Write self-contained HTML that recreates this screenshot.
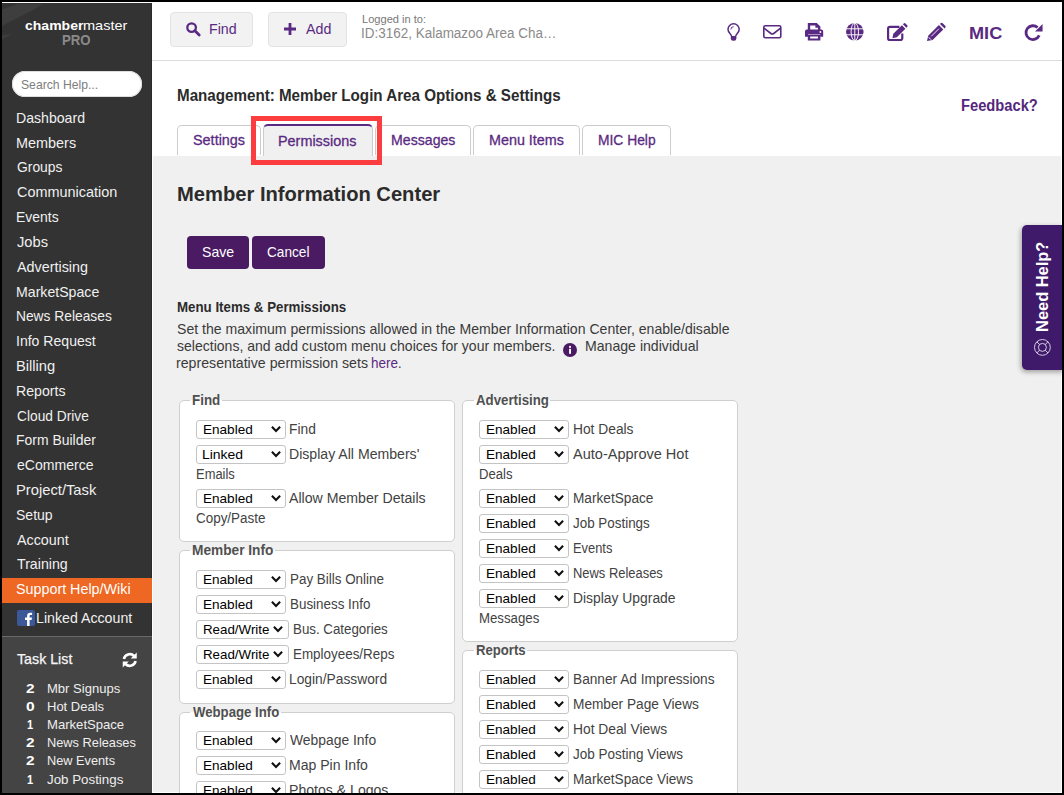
<!DOCTYPE html>
<html lang="en"><head><meta charset="utf-8"><title>Member Login Area Options &amp; Settings</title>
<style>
html,body{margin:0;padding:0}
body{width:1064px;height:795px;background:#000;position:relative;overflow:hidden;font-family:"Liberation Sans",sans-serif}
#app{position:absolute;left:2px;top:2px;width:1060px;height:791px;background:#fff;overflow:hidden}
#app *{box-sizing:border-box}
.abs,.t,.b{position:absolute}
.t{white-space:pre;transform-origin:0 50%;display:block}
#page{position:absolute;left:-2px;top:-2px;width:1064px;height:795px}
.sel{position:absolute;background:#fff;border:1px solid #c4c4c4;border-radius:3px}
.fs{position:absolute;background:#fff;border:1px solid #cfcfcf;border-radius:5px}
.gap{position:absolute;height:1px;background:#fff}
.tab{position:absolute;border:1px solid #ccc;border-bottom:0;border-radius:5px 5px 0 0;background:#fff}
.btn{position:absolute;background:#f2f2f2;border:1px solid #e3e3e3;border-radius:4px}
.pbtn{position:absolute;background:#4a1b63;border-radius:4px}
svg{position:absolute;overflow:visible}
</style></head><body>
<div id="app"><div id="page">

<div class="abs" style="left:2px;top:3px;width:150px;height:790px;background:#333;border-right:1px solid #2a2a2a"></div>
<svg style="left:2px;top:3px" width="150" height="60" viewBox="0 0 150 60"><path d="M0 6.500 L16 1 L41 1 L32 6.500 L0 23 Z" fill="#3e3e3e"/><path d="M0 32 L11 30.400 L0 36.500Z" fill="#3c3c3c"/></svg>
<div class="abs" style="left:2px;top:636px;width:150px;height:157px;background:#444;border-top:1px solid #6a6a6a"></div>
<div class="abs" style="left:152px;top:60px;width:910px;height:1px;background:#ddd"></div>
<div class="abs" style="left:153px;top:156px;width:908px;height:636px;background:#f0f0f0"></div>
<div class="abs" style="left:12px;top:71px;width:130px;height:25.5px;border-radius:13px;background:#fff;box-shadow:inset 0 0 0 1px #ddd"></div>
<div class="abs" style="left:2px;top:578px;width:150px;height:25px;background:#ee6723"></div>
<svg style="left:17px;top:610px" width="18" height="16" viewBox="0 0 18 16"><rect width="18" height="16" rx="2" fill="#3b5998"/><path d="M12.6 16V10h2l.35-2.4H12.6V6.2c0-.7.2-1.2 1.2-1.2h1.3V2.9c-.2 0-1-.1-1.9-.1-1.9 0-3.1 1.1-3.1 3.2v1.6H8v2.4h2.1V16z" fill="#fff"/></svg>
<svg style="left:121.900px;top:652.100px" width="15.500" height="16" viewBox="0 0 16 16" fill="none" stroke="#fff" stroke-width="2.700"><path d="M2 7A6.100 6.100 0 0 1 12.400 3.900"/><path d="M14 9A6.100 6.100 0 0 1 3.600 12.100"/><path d="M15.200 0.300v6.200H9z" fill="#fff" stroke="none"/><path d="M0.800 15.700V9.500h6.200z" fill="#fff" stroke="none"/></svg>
<div class="btn" style="left:170px;top:12px;width:83px;height:35px"></div>
<div class="btn" style="left:268px;top:12px;width:79px;height:35px"></div>
<svg style="left:186px;top:22px" width="14.5" height="14" viewBox="0 0 14.5 14" fill="none" stroke="#5a2a82"><circle cx="5.6" cy="5.6" r="4.3" stroke-width="2.3"/><path d="M8.9 8.8l4.3 4.2" stroke-width="2.8" stroke-linecap="round"/></svg>
<svg style="left:284px;top:23px" width="12" height="12" viewBox="0 0 12 12"><path d="M4.6 0h2.8v4.6H12v2.8H7.4V12H4.6V7.4H0V4.6h4.6z" fill="#5a2a82"/></svg>
<svg style="left:727px;top:23px" width="13.2" height="18" viewBox="0 0 13.2 18" fill="none" stroke="#5a2a82"><path d="M4.400 13c0-2.100-3.400-3.400-3.400-6.600a5.600 5.600 0 0 1 11.200 0c0 3.200-3.400 4.500-3.400 6.600" stroke-width="1.500"/><path d="M3.900 6.400a2.700 2.700 0 0 1 2.700-2.700" stroke-width="1"/><path d="M3.800 13.100h5.600v2.300a2.400 2.400 0 0 1-2.400 2.400h-.8a2.400 2.400 0 0 1-2.400-2.400z" fill="#5a2a82" stroke="none"/></svg>
<svg style="left:763.3px;top:25.2px" width="18.6" height="13.6" viewBox="0 0 18.600 13.600" fill="none" stroke="#5a2a82" stroke-width="1.600"><rect x=".8" y=".8" width="17" height="12" rx="1.500"/><path d="M1 3.200l6.900 5.300a2.300 2.300 0 0 0 2.800 0L17.600 3.200"/></svg>
<svg style="left:804.8px;top:23.2px" width="18.200" height="17.600" viewBox="0 0 18.200 17.600" fill="#5a2a82"><path d="M2.800 0h9l3.600 3.600V7.800h-2.400V4.800h-2.600V2.400H5.200v5.400H2.800z"/><path d="M1.800 6.600h14.600a1.800 1.800 0 0 1 1.800 1.800v5.400h-3v-2.800H3v2.800H0V8.400a1.800 1.800 0 0 1 1.800-1.800z"/><path d="M2.800 11.600h12.600v6H2.800z M5.200 13.600v1.800h7.800v-1.800z" fill-rule="evenodd"/><circle cx="15.400" cy="9" r=".9" fill="#fff"/></svg>
<svg style="left:846.2px;top:23.4px" width="17.6" height="17.600" viewBox="0 0 17.600 17.600"><circle cx="8.800" cy="8.800" r="8.800" fill="#5a2a82"/><g fill="none" stroke="#fff" stroke-width=".95"><ellipse cx="8.800" cy="8.800" rx="3.700" ry="8.800"/><path d="M8.800 0v17.600M0 5.800h17.600M0 11.800h17.600"/></g></svg>
<svg style="left:886.8px;top:22.700px" width="20.700" height="18.100" viewBox="0 0 20.700 18.100"><path d="M12.400 3.800H2.900A1.800 1.800 0 0 0 1.100 5.600v9.600a1.800 1.800 0 0 0 1.800 1.800h10.600a1.800 1.800 0 0 0 1.800-1.800V10.600" fill="none" stroke="#5a2a82" stroke-width="2.200"/><path d="M5.400 14.200l.9-4.400L14.900 1.200l3.500 3.500L9.800 13.300z M15.900.3l.8-.8a1.300 1.300 0 0 1 1.800 0l1.700 1.700a1.300 1.300 0 0 1 0 1.800l-.8.800z" fill="#5a2a82" transform="translate(0,1)"/></svg>
<svg style="left:927.1px;top:22.700px" width="18.600" height="18.100" viewBox="0 0 18.600 18.100"><path d="M0 18.100l1.200-5.400L11.900 2l4.400 4.400L5.600 17.100z M13 .9l.6-.6a1.500 1.500 0 0 1 2.100 0l2.500 2.500a1.500 1.500 0 0 1 0 2.100l-.6.600z" fill="#5a2a82"/><path d="M1.700 14.300l2.300 2.300" stroke="#fff" stroke-width="1"/><path d="M4.300 13.300l7.600-7.600" stroke="#fff" stroke-width=".9"/></svg>
<svg style="left:1025.300px;top:24.400px" width="17.600" height="16.400" viewBox="0 0 17.600 16.400"><path d="M14.200 11.400A6.900 6.900 0 1 1 12.600 3.600" fill="none" stroke="#5a2a82" stroke-width="2.800"/><path d="M17.600 0v7.600h-7.600z" fill="#5a2a82"/></svg>
<div class="tab" style="left:177px;top:125px;width:84px;height:30px"></div>
<div class="tab" style="left:263px;top:124px;width:110px;height:32px;background:#f0f0f0;border-top:2px solid #5a2a82"></div>
<div class="tab" style="left:375px;top:125px;width:95.500px;height:30px"></div>
<div class="tab" style="left:473px;top:125px;width:106.500px;height:30px"></div>
<div class="tab" style="left:582px;top:125px;width:89px;height:30px"></div>
<div class="abs" style="left:251px;top:116px;width:131px;height:49px;border:5px solid #fb3d40"></div>
<div class="pbtn" style="left:187px;top:236px;width:62px;height:33px"></div>
<div class="pbtn" style="left:252px;top:236px;width:73px;height:33px"></div>
<svg style="left:563px;top:342.700px" width="14" height="14" viewBox="0 0 14 14"><circle cx="7" cy="7" r="7" fill="#4a1b63"/><rect x="6.100" y="2.900" width="1.900" height="1.900" fill="#fff"/><rect x="6.100" y="5.800" width="1.900" height="5" fill="#fff"/></svg>
<div class="fs" style="left:179px;top:400px;width:276px;height:142px"></div>
<div class="gap" style="left:190.3px;top:400px;width:31.799999999999983px"></div>
<div class="fs" style="left:179px;top:550px;width:276px;height:154px"></div>
<div class="gap" style="left:190.3px;top:550px;width:85.09999999999997px"></div>
<div class="fs" style="left:179px;top:712px;width:276px;height:118px"></div>
<div class="gap" style="left:190.3px;top:712px;width:90.69999999999999px"></div>
<div class="fs" style="left:462px;top:400px;width:276px;height:242px"></div>
<div class="gap" style="left:473.8px;top:400px;width:76.69999999999999px"></div>
<div class="fs" style="left:462px;top:650px;width:276px;height:180px"></div>
<div class="gap" style="left:473.8px;top:650px;width:53.599999999999966px"></div>
<div class="sel" style="left:196px;top:420px;width:90px;height:19px"></div>
<svg style="left:270.9px;top:426.3px" width="10" height="6" viewBox="0 0 10 6"><path d="M.9 .8l4.100 4.200 4.100-4.200" fill="none" stroke="#111" stroke-width="2.100"/></svg>
<div class="sel" style="left:196px;top:445px;width:90px;height:19px"></div>
<svg style="left:270.9px;top:451.3px" width="10" height="6" viewBox="0 0 10 6"><path d="M.9 .8l4.100 4.200 4.100-4.200" fill="none" stroke="#111" stroke-width="2.100"/></svg>
<div class="sel" style="left:196px;top:489px;width:90px;height:19px"></div>
<svg style="left:270.9px;top:495.3px" width="10" height="6" viewBox="0 0 10 6"><path d="M.9 .8l4.100 4.200 4.100-4.200" fill="none" stroke="#111" stroke-width="2.100"/></svg>
<div class="sel" style="left:196px;top:570px;width:90px;height:19px"></div>
<svg style="left:270.9px;top:576.3px" width="10" height="6" viewBox="0 0 10 6"><path d="M.9 .8l4.100 4.200 4.100-4.200" fill="none" stroke="#111" stroke-width="2.100"/></svg>
<div class="sel" style="left:196px;top:595px;width:90px;height:19px"></div>
<svg style="left:270.9px;top:601.3px" width="10" height="6" viewBox="0 0 10 6"><path d="M.9 .8l4.100 4.200 4.100-4.200" fill="none" stroke="#111" stroke-width="2.100"/></svg>
<div class="sel" style="left:196px;top:620px;width:93px;height:19px"></div>
<svg style="left:273.4px;top:626.3px" width="10" height="6" viewBox="0 0 10 6"><path d="M.9 .8l4.100 4.200 4.100-4.200" fill="none" stroke="#111" stroke-width="2.100"/></svg>
<div class="sel" style="left:196px;top:645px;width:93px;height:19px"></div>
<svg style="left:273.4px;top:651.3px" width="10" height="6" viewBox="0 0 10 6"><path d="M.9 .8l4.100 4.200 4.100-4.200" fill="none" stroke="#111" stroke-width="2.100"/></svg>
<div class="sel" style="left:196px;top:670px;width:90px;height:19px"></div>
<svg style="left:270.9px;top:676.3px" width="10" height="6" viewBox="0 0 10 6"><path d="M.9 .8l4.100 4.200 4.100-4.200" fill="none" stroke="#111" stroke-width="2.100"/></svg>
<div class="sel" style="left:196px;top:731px;width:90px;height:19px"></div>
<svg style="left:270.9px;top:737.3px" width="10" height="6" viewBox="0 0 10 6"><path d="M.9 .8l4.100 4.200 4.100-4.200" fill="none" stroke="#111" stroke-width="2.100"/></svg>
<div class="sel" style="left:196px;top:756px;width:90px;height:19px"></div>
<svg style="left:270.9px;top:762.3px" width="10" height="6" viewBox="0 0 10 6"><path d="M.9 .8l4.100 4.200 4.100-4.200" fill="none" stroke="#111" stroke-width="2.100"/></svg>
<div class="sel" style="left:196px;top:781px;width:90px;height:19px"></div>
<svg style="left:270.9px;top:787.3px" width="10" height="6" viewBox="0 0 10 6"><path d="M.9 .8l4.100 4.200 4.100-4.200" fill="none" stroke="#111" stroke-width="2.100"/></svg>
<div class="sel" style="left:479px;top:420px;width:90px;height:19px"></div>
<svg style="left:553.9px;top:426.3px" width="10" height="6" viewBox="0 0 10 6"><path d="M.9 .8l4.100 4.200 4.100-4.200" fill="none" stroke="#111" stroke-width="2.100"/></svg>
<div class="sel" style="left:479px;top:445px;width:90px;height:19px"></div>
<svg style="left:553.9px;top:451.3px" width="10" height="6" viewBox="0 0 10 6"><path d="M.9 .8l4.100 4.200 4.100-4.200" fill="none" stroke="#111" stroke-width="2.100"/></svg>
<div class="sel" style="left:479px;top:489px;width:90px;height:19px"></div>
<svg style="left:553.9px;top:495.3px" width="10" height="6" viewBox="0 0 10 6"><path d="M.9 .8l4.100 4.200 4.100-4.200" fill="none" stroke="#111" stroke-width="2.100"/></svg>
<div class="sel" style="left:479px;top:514px;width:90px;height:19px"></div>
<svg style="left:553.9px;top:520.3px" width="10" height="6" viewBox="0 0 10 6"><path d="M.9 .8l4.100 4.200 4.100-4.200" fill="none" stroke="#111" stroke-width="2.100"/></svg>
<div class="sel" style="left:479px;top:539px;width:90px;height:19px"></div>
<svg style="left:553.9px;top:545.3px" width="10" height="6" viewBox="0 0 10 6"><path d="M.9 .8l4.100 4.200 4.100-4.200" fill="none" stroke="#111" stroke-width="2.100"/></svg>
<div class="sel" style="left:479px;top:564px;width:90px;height:19px"></div>
<svg style="left:553.9px;top:570.3px" width="10" height="6" viewBox="0 0 10 6"><path d="M.9 .8l4.100 4.200 4.100-4.200" fill="none" stroke="#111" stroke-width="2.100"/></svg>
<div class="sel" style="left:479px;top:589px;width:90px;height:19px"></div>
<svg style="left:553.9px;top:595.3px" width="10" height="6" viewBox="0 0 10 6"><path d="M.9 .8l4.100 4.200 4.100-4.200" fill="none" stroke="#111" stroke-width="2.100"/></svg>
<div class="sel" style="left:479px;top:670px;width:90px;height:19px"></div>
<svg style="left:553.9px;top:676.3px" width="10" height="6" viewBox="0 0 10 6"><path d="M.9 .8l4.100 4.200 4.100-4.200" fill="none" stroke="#111" stroke-width="2.100"/></svg>
<div class="sel" style="left:479px;top:695px;width:90px;height:19px"></div>
<svg style="left:553.9px;top:701.3px" width="10" height="6" viewBox="0 0 10 6"><path d="M.9 .8l4.100 4.200 4.100-4.200" fill="none" stroke="#111" stroke-width="2.100"/></svg>
<div class="sel" style="left:479px;top:720px;width:90px;height:19px"></div>
<svg style="left:553.9px;top:726.3px" width="10" height="6" viewBox="0 0 10 6"><path d="M.9 .8l4.100 4.200 4.100-4.200" fill="none" stroke="#111" stroke-width="2.100"/></svg>
<div class="sel" style="left:479px;top:745px;width:90px;height:19px"></div>
<svg style="left:553.9px;top:751.3px" width="10" height="6" viewBox="0 0 10 6"><path d="M.9 .8l4.100 4.200 4.100-4.200" fill="none" stroke="#111" stroke-width="2.100"/></svg>
<div class="sel" style="left:479px;top:770px;width:90px;height:19px"></div>
<svg style="left:553.9px;top:776.3px" width="10" height="6" viewBox="0 0 10 6"><path d="M.9 .8l4.100 4.200 4.100-4.200" fill="none" stroke="#111" stroke-width="2.100"/></svg>
<div class="abs" style="left:1022px;top:225px;width:42px;height:144.500px;background:#3f1a6b;border-radius:5px 0 0 5px;box-shadow:-1px 2px 5px rgba(0,0,0,.35)"></div>
<svg style="left:1034px;top:338.700px" width="16.800" height="16.800" viewBox="0 0 16.800 16.800" fill="none" stroke="#e6dcf0" stroke-width=".9"><circle cx="8.400" cy="8.400" r="7.900"/><circle cx="8.400" cy="8.400" r="4"/><path d="M2.800 2.800l2.800 2.800M14 2.800l-2.800 2.800M2.800 14l2.800-2.800M14 14l-2.800-2.800"/></svg>
<span class="t" id="t0" style="left:24.99px;top:17.00px;font-size:13.5px;line-height:17px;color:#fff;transform:scaleX(1.0379);font-weight:700">chamber</span>
<span class="t" id="t1" style="left:82.65px;top:17.00px;font-size:13.5px;line-height:17px;color:#fff;transform:scaleX(1.0754)">master</span>
<span class="t" id="t2" style="left:62.40px;top:31.00px;font-size:14px;line-height:18px;color:#8a8a8a;transform:scaleX(0.9442);font-weight:700">PRO</span>
<span class="t" id="t3" style="left:20.60px;top:77.00px;font-size:13px;line-height:16px;color:#7d7d7d;transform:scaleX(0.9362)">Search Help...</span>
<span class="t" id="t4" style="left:16.48px;top:108.00px;font-size:15px;line-height:19px;color:#f0f0f0;transform:scaleX(0.9400)">Dashboard</span>
<span class="t" id="t5" style="left:16.34px;top:133.00px;font-size:15px;line-height:19px;color:#f0f0f0;transform:scaleX(0.9621)">Members</span>
<span class="t" id="t6" style="left:16.88px;top:157.00px;font-size:15px;line-height:19px;color:#f0f0f0;transform:scaleX(0.9242)">Groups</span>
<span class="t" id="t7" style="left:16.60px;top:182.00px;font-size:15px;line-height:19px;color:#f0f0f0;transform:scaleX(0.9619)">Communication</span>
<span class="t" id="t8" style="left:16.37px;top:207.00px;font-size:15px;line-height:19px;color:#f0f0f0;transform:scaleX(0.9288)">Events</span>
<span class="t" id="t9" style="left:17.10px;top:232.00px;font-size:15px;line-height:19px;color:#f0f0f0;transform:scaleX(0.9788)">Jobs</span>
<span class="t" id="t10" style="left:17.35px;top:257.00px;font-size:15px;line-height:19px;color:#f0f0f0;transform:scaleX(0.9569)">Advertising</span>
<span class="t" id="t11" style="left:16.47px;top:282.00px;font-size:15px;line-height:19px;color:#f0f0f0;transform:scaleX(0.9423)">MarketSpace</span>
<span class="t" id="t12" style="left:16.38px;top:306.00px;font-size:15px;line-height:19px;color:#f0f0f0;transform:scaleX(0.9191)">News Releases</span>
<span class="t" id="t13" style="left:16.37px;top:331.00px;font-size:15px;line-height:19px;color:#f0f0f0;transform:scaleX(0.9369)">Info Request</span>
<span class="t" id="t14" style="left:16.39px;top:356.00px;font-size:15px;line-height:19px;color:#f0f0f0;transform:scaleX(0.9797)">Billing</span>
<span class="t" id="t15" style="left:15.65px;top:381.00px;font-size:15px;line-height:19px;color:#f0f0f0;transform:scaleX(0.9429)">Reports</span>
<span class="t" id="t16" style="left:16.93px;top:406.00px;font-size:15px;line-height:19px;color:#f0f0f0;transform:scaleX(0.9164)">Cloud Drive</span>
<span class="t" id="t17" style="left:16.48px;top:430.00px;font-size:15px;line-height:19px;color:#f0f0f0;transform:scaleX(0.9294)">Form Builder</span>
<span class="t" id="t18" style="left:17.37px;top:455.00px;font-size:15px;line-height:19px;color:#f0f0f0;transform:scaleX(0.9379)">eCommerce</span>
<span class="t" id="t19" style="left:16.40px;top:480.00px;font-size:15px;line-height:19px;color:#f0f0f0;transform:scaleX(0.9832)">Project/Task</span>
<span class="t" id="t20" style="left:15.90px;top:505.00px;font-size:15px;line-height:19px;color:#f0f0f0;transform:scaleX(0.9353)">Setup</span>
<span class="t" id="t21" style="left:17.48px;top:530.00px;font-size:15px;line-height:19px;color:#f0f0f0;transform:scaleX(0.9535)">Account</span>
<span class="t" id="t22" style="left:17.28px;top:554.00px;font-size:15px;line-height:19px;color:#f0f0f0;transform:scaleX(0.9465)">Training</span>
<span class="t" id="t23" style="left:16.04px;top:579.00px;font-size:15px;line-height:19px;color:#fff;transform:scaleX(0.9543)">Support Help/Wiki</span>
<span class="t" id="t24" style="left:35.76px;top:608.00px;font-size:15px;line-height:19px;color:#f0f0f0;transform:scaleX(0.9457)">Linked Account</span>
<span class="t" id="t25" style="left:17.30px;top:650.00px;font-size:14.5px;line-height:18px;color:#f6f6f6;transform:scaleX(0.9809);-webkit-text-stroke:.25px #f6f6f6">Task List</span>
<span class="t" id="t26" style="left:26.32px;top:681.00px;font-size:13px;line-height:16px;color:#fff;transform:scaleX(1.1841);font-weight:700">2</span>
<span class="t" id="t27" style="left:46.92px;top:681.00px;font-size:13px;line-height:16px;color:#eee;transform:scaleX(1.0032)">Mbr Signups</span>
<span class="t" id="t28" style="left:26.20px;top:699.00px;font-size:13px;line-height:16px;color:#fff;transform:scaleX(1.1982);font-weight:700">0</span>
<span class="t" id="t29" style="left:46.92px;top:699.00px;font-size:13px;line-height:16px;color:#eee;transform:scaleX(0.9993)">Hot Deals</span>
<span class="t" id="t30" style="left:27.04px;top:717.00px;font-size:13px;line-height:16px;color:#fff;transform:scaleX(0.8552);font-weight:700">1</span>
<span class="t" id="t31" style="left:46.89px;top:717.00px;font-size:13px;line-height:16px;color:#eee;transform:scaleX(1.0072)">MarketSpace</span>
<span class="t" id="t32" style="left:26.32px;top:735.00px;font-size:13px;line-height:16px;color:#fff;transform:scaleX(1.1841);font-weight:700">2</span>
<span class="t" id="t33" style="left:46.95px;top:735.00px;font-size:13px;line-height:16px;color:#eee;transform:scaleX(0.9840)">News Releases</span>
<span class="t" id="t34" style="left:26.32px;top:753.00px;font-size:13px;line-height:16px;color:#fff;transform:scaleX(1.1841);font-weight:700">2</span>
<span class="t" id="t35" style="left:46.96px;top:753.00px;font-size:13px;line-height:16px;color:#eee;transform:scaleX(0.9810)">New Events</span>
<span class="t" id="t36" style="left:27.04px;top:772.00px;font-size:13px;line-height:16px;color:#fff;transform:scaleX(0.8552);font-weight:700">1</span>
<span class="t" id="t37" style="left:47.15px;top:772.00px;font-size:13px;line-height:16px;color:#eee;transform:scaleX(1.0254)">Job Postings</span>
<span class="t" id="t38" style="left:208.98px;top:19.01px;font-size:15px;line-height:19px;color:#5a2a82;transform:scaleX(0.9468)">Find</span>
<span class="t" id="t39" style="left:306.15px;top:19.01px;font-size:15px;line-height:19px;color:#5a2a82;transform:scaleX(0.9504)">Add</span>
<span class="t" id="t40" style="left:362.26px;top:13.00px;font-size:10.5px;line-height:13px;color:#777;transform:scaleX(1.0557)">Logged in to:</span>
<span class="t" id="t41" style="left:361.48px;top:24.01px;font-size:14px;line-height:18px;color:#8a8a8a;transform:scaleX(0.9622)">ID:3162, Kalamazoo Area Cha…</span>
<span class="t" id="t42" style="left:968.91px;top:23.00px;font-size:17px;line-height:21px;color:#5a2a82;transform:scaleX(1.0668);font-weight:700">MIC</span>
<span class="t" id="t43" style="left:176.65px;top:86.00px;font-size:16px;line-height:20px;color:#2b2b2b;transform:scaleX(0.9479);font-weight:700">Management: Member Login Area Options &amp; Settings</span>
<span class="t" id="t44" style="left:961.08px;top:96.01px;font-size:16px;line-height:20px;color:#55277c;transform:scaleX(0.9192);font-weight:700">Feedback?</span>
<span class="t" id="t45" style="left:192.73px;top:131.01px;font-size:14.5px;line-height:18px;color:#5a2a82;transform:scaleX(0.9937);-webkit-text-stroke:.3px #5a2a82">Settings</span>
<span class="t" id="t46" style="left:278.11px;top:132.01px;font-size:14.5px;line-height:18px;color:#5a2a82;transform:scaleX(0.9934);-webkit-text-stroke:.3px #5a2a82">Permissions</span>
<span class="t" id="t47" style="left:390.93px;top:131.01px;font-size:14.5px;line-height:18px;color:#5a2a82;transform:scaleX(0.9748);-webkit-text-stroke:.3px #5a2a82">Messages</span>
<span class="t" id="t48" style="left:488.81px;top:131.01px;font-size:14.5px;line-height:18px;color:#5a2a82;transform:scaleX(0.9893);-webkit-text-stroke:.3px #5a2a82">Menu Items</span>
<span class="t" id="t49" style="left:597.85px;top:131.01px;font-size:14.5px;line-height:18px;color:#5a2a82;transform:scaleX(0.9534);-webkit-text-stroke:.3px #5a2a82">MIC Help</span>
<span class="t" id="t50" style="left:176.76px;top:181.00px;font-size:21px;line-height:26px;color:#2b2b2b;transform:scaleX(0.9599);font-weight:700">Member Information Center</span>
<span class="t" id="t51" style="left:201.55px;top:242.00px;font-size:15px;line-height:19px;color:#fff;transform:scaleX(0.9405)">Save</span>
<span class="t" id="t52" style="left:266.62px;top:242.00px;font-size:15px;line-height:19px;color:#fff;transform:scaleX(0.9093)">Cancel</span>
<span class="t" id="t53" style="left:176.62px;top:298.01px;font-size:14.5px;line-height:18px;color:#2b2b2b;transform:scaleX(0.9170);font-weight:700">Menu Items &amp; Permissions</span>
<span class="t" id="t54" style="left:176.79px;top:319.00px;font-size:15px;line-height:19px;color:#3a3a3a;transform:scaleX(0.9387)">Set the maximum permissions allowed in the Member Information Center, enable/disable</span>
<span class="t" id="t55" style="left:177.28px;top:336.01px;font-size:15px;line-height:19px;color:#3a3a3a;transform:scaleX(0.9359)">selections, and add custom menu choices for your members.</span>
<span class="t" id="t56" style="left:585.13px;top:336.01px;font-size:15px;line-height:19px;color:#3a3a3a;transform:scaleX(0.9401)">Manage individual</span>
<span class="t" id="t57" style="left:175.71px;top:353.01px;font-size:15px;line-height:19px;color:#3a3a3a;transform:scaleX(0.9439)">representative permission sets</span>
<span class="t" id="t58" style="left:371.25px;top:353.01px;font-size:15px;line-height:19px;color:#5a2a82;transform:scaleX(0.8996)">here</span>
<span class="t" id="t59" style="left:398.25px;top:353.01px;font-size:15px;line-height:19px;color:#3a3a3a;transform:scaleX(0.8500)">.</span>
<span class="t" id="t61" style="left:191.79px;top:391.01px;font-size:14px;line-height:18px;color:#505050;transform:scaleX(0.9569);font-weight:700">Find</span>
<span class="t" id="t62" style="left:203.38px;top:421.00px;font-size:13.33px;line-height:17px;color:#000;transform:scaleX(1.0168)">Enabled</span>
<span class="t" id="t63" style="left:289.04px;top:420.01px;font-size:14px;line-height:18px;color:#424242;transform:scaleX(0.9852)">Find</span>
<span class="t" id="t64" style="left:201.58px;top:446.00px;font-size:13.33px;line-height:17px;color:#000;transform:scaleX(1.0457)">Linked</span>
<span class="t" id="t65" style="left:289.10px;top:445.01px;font-size:14px;line-height:18px;color:#424242;transform:scaleX(1.0065)">Display All Members'</span>
<span class="t" id="t66" style="left:195.99px;top:465.00px;font-size:14px;line-height:18px;color:#424242;transform:scaleX(0.9243)">Emails</span>
<span class="t" id="t67" style="left:203.38px;top:490.00px;font-size:13.33px;line-height:17px;color:#000;transform:scaleX(1.0168)">Enabled</span>
<span class="t" id="t68" style="left:288.75px;top:489.01px;font-size:14px;line-height:18px;color:#424242;transform:scaleX(1.0094)">Allow Member Details</span>
<span class="t" id="t69" style="left:196.13px;top:509.00px;font-size:14px;line-height:18px;color:#424242;transform:scaleX(0.9599)">Copy/Paste</span>
<span class="t" id="t70" style="left:191.80px;top:541.01px;font-size:14px;line-height:18px;color:#505050;transform:scaleX(0.9772);font-weight:700">Member Info</span>
<span class="t" id="t71" style="left:203.38px;top:571.00px;font-size:13.33px;line-height:17px;color:#000;transform:scaleX(1.0168)">Enabled</span>
<span class="t" id="t72" style="left:290.45px;top:570.01px;font-size:14px;line-height:18px;color:#424242;transform:scaleX(0.9582)">Pay Bills Online</span>
<span class="t" id="t73" style="left:203.38px;top:596.00px;font-size:13.33px;line-height:17px;color:#000;transform:scaleX(1.0168)">Enabled</span>
<span class="t" id="t74" style="left:289.80px;top:595.01px;font-size:14px;line-height:18px;color:#424242;transform:scaleX(0.9563)">Business Info</span>
<span class="t" id="t75" style="left:203.40px;top:621.00px;font-size:13.33px;line-height:17px;color:#000;transform:scaleX(0.9999)">Read/Write</span>
<span class="t" id="t76" style="left:292.86px;top:620.01px;font-size:14px;line-height:18px;color:#424242;transform:scaleX(0.9511)">Bus. Categories</span>
<span class="t" id="t77" style="left:203.40px;top:646.00px;font-size:13.33px;line-height:17px;color:#000;transform:scaleX(0.9999)">Read/Write</span>
<span class="t" id="t78" style="left:292.84px;top:645.01px;font-size:14px;line-height:18px;color:#424242;transform:scaleX(0.9578)">Employees/Reps</span>
<span class="t" id="t79" style="left:203.38px;top:671.00px;font-size:13.33px;line-height:17px;color:#000;transform:scaleX(1.0168)">Enabled</span>
<span class="t" id="t80" style="left:289.27px;top:670.01px;font-size:14px;line-height:18px;color:#424242;transform:scaleX(0.9844)">Login/Password</span>
<span class="t" id="t81" style="left:193.00px;top:703.01px;font-size:14px;line-height:18px;color:#505050;transform:scaleX(0.9421);font-weight:700">Webpage Info</span>
<span class="t" id="t82" style="left:203.38px;top:732.00px;font-size:13.33px;line-height:17px;color:#000;transform:scaleX(1.0168)">Enabled</span>
<span class="t" id="t83" style="left:290.42px;top:731.01px;font-size:14px;line-height:18px;color:#424242;transform:scaleX(0.9907)">Webpage Info</span>
<span class="t" id="t84" style="left:203.38px;top:757.00px;font-size:13.33px;line-height:17px;color:#000;transform:scaleX(1.0168)">Enabled</span>
<span class="t" id="t85" style="left:289.36px;top:756.01px;font-size:14px;line-height:18px;color:#424242;transform:scaleX(1.0035)">Map Pin Info</span>
<span class="t" id="t86" style="left:203.38px;top:782.00px;font-size:13.33px;line-height:17px;color:#000;transform:scaleX(1.0168)">Enabled</span>
<span class="t" id="t87" style="left:288.76px;top:781.01px;font-size:14px;line-height:18px;color:#424242;transform:scaleX(1.0057)">Photos &amp; Logos</span>
<span class="t" id="t88" style="left:476.15px;top:391.01px;font-size:14px;line-height:18px;color:#505050;transform:scaleX(0.9462);font-weight:700">Advertising</span>
<span class="t" id="t89" style="left:486.38px;top:421.00px;font-size:13.33px;line-height:17px;color:#000;transform:scaleX(1.0168)">Enabled</span>
<span class="t" id="t90" style="left:573.32px;top:420.01px;font-size:14px;line-height:18px;color:#424242;transform:scaleX(0.9841)">Hot Deals</span>
<span class="t" id="t91" style="left:486.38px;top:446.00px;font-size:13.33px;line-height:17px;color:#000;transform:scaleX(1.0168)">Enabled</span>
<span class="t" id="t92" style="left:573.14px;top:445.01px;font-size:14px;line-height:18px;color:#424242;transform:scaleX(1.0375)">Auto-Approve Hot</span>
<span class="t" id="t93" style="left:478.97px;top:465.00px;font-size:14px;line-height:18px;color:#424242;transform:scaleX(0.9341)">Deals</span>
<span class="t" id="t94" style="left:486.38px;top:490.00px;font-size:13.33px;line-height:17px;color:#000;transform:scaleX(1.0168)">Enabled</span>
<span class="t" id="t95" style="left:572.67px;top:489.01px;font-size:14px;line-height:18px;color:#424242;transform:scaleX(0.9745)">MarketSpace</span>
<span class="t" id="t96" style="left:486.38px;top:515.00px;font-size:13.33px;line-height:17px;color:#000;transform:scaleX(1.0168)">Enabled</span>
<span class="t" id="t97" style="left:573.49px;top:514.01px;font-size:14px;line-height:18px;color:#424242;transform:scaleX(0.9574)">Job Postings</span>
<span class="t" id="t98" style="left:486.38px;top:540.00px;font-size:13.33px;line-height:17px;color:#000;transform:scaleX(1.0168)">Enabled</span>
<span class="t" id="t99" style="left:572.98px;top:539.01px;font-size:14px;line-height:18px;color:#424242;transform:scaleX(0.9187)">Events</span>
<span class="t" id="t100" style="left:486.38px;top:565.00px;font-size:13.33px;line-height:17px;color:#000;transform:scaleX(1.0168)">Enabled</span>
<span class="t" id="t101" style="left:572.99px;top:564.01px;font-size:14px;line-height:18px;color:#424242;transform:scaleX(0.9235)">News Releases</span>
<span class="t" id="t102" style="left:486.38px;top:590.00px;font-size:13.33px;line-height:17px;color:#000;transform:scaleX(1.0168)">Enabled</span>
<span class="t" id="t103" style="left:572.62px;top:589.01px;font-size:14px;line-height:18px;color:#424242;transform:scaleX(0.9907)">Display Upgrade</span>
<span class="t" id="t104" style="left:478.96px;top:609.01px;font-size:14px;line-height:18px;color:#424242;transform:scaleX(0.9442)">Messages</span>
<span class="t" id="t105" style="left:475.87px;top:641.00px;font-size:14px;line-height:18px;color:#505050;transform:scaleX(0.9391);font-weight:700">Reports</span>
<span class="t" id="t106" style="left:486.38px;top:671.00px;font-size:13.33px;line-height:17px;color:#000;transform:scaleX(1.0168)">Enabled</span>
<span class="t" id="t107" style="left:573.49px;top:670.01px;font-size:14px;line-height:18px;color:#424242;transform:scaleX(0.9780)">Banner Ad Impressions</span>
<span class="t" id="t108" style="left:486.38px;top:696.00px;font-size:13.33px;line-height:17px;color:#000;transform:scaleX(1.0168)">Enabled</span>
<span class="t" id="t109" style="left:573.49px;top:695.01px;font-size:14px;line-height:18px;color:#424242;transform:scaleX(0.9762)">Member Page Views</span>
<span class="t" id="t110" style="left:486.38px;top:721.00px;font-size:13.33px;line-height:17px;color:#000;transform:scaleX(1.0168)">Enabled</span>
<span class="t" id="t111" style="left:573.38px;top:720.01px;font-size:14px;line-height:18px;color:#424242;transform:scaleX(0.9857)">Hot Deal Views</span>
<span class="t" id="t112" style="left:486.38px;top:746.00px;font-size:13.33px;line-height:17px;color:#000;transform:scaleX(1.0168)">Enabled</span>
<span class="t" id="t113" style="left:573.39px;top:745.01px;font-size:14px;line-height:18px;color:#424242;transform:scaleX(0.9628)">Job Posting Views</span>
<span class="t" id="t114" style="left:486.38px;top:771.00px;font-size:13.33px;line-height:17px;color:#000;transform:scaleX(1.0168)">Enabled</span>
<span class="t" id="t115" style="left:573.30px;top:770.01px;font-size:14px;line-height:18px;color:#424242;transform:scaleX(0.9714)">MarketSpace Views</span>
<span class="t" style="left:1048.800px;top:330.600px;font-size:17px;line-height:20px;font-weight:700;color:#fff;transform-origin:0 0;transform:rotate(-90deg) scaleX(0.9660) translate(-1.00px,-15.89px)">Need Help?</span>
</div></div>
</body></html>
